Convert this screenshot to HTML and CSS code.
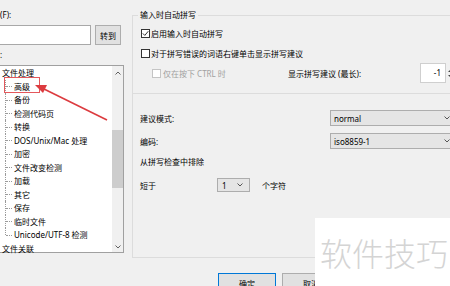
FILE: index.html
```html
<!DOCTYPE html>
<html lang="zh-CN">
<head>
    <meta charset="UTF-8">
    <meta name="viewport" content="width=device-width, initial-scale=1.0">
    <title>选项 - 拼写检查</title>
    <link rel="stylesheet" href="styles.css">
</head>
<body>

<div class="dialog">
    <!-- 左侧：查找 + 分类树 -->
    <div class="left">
        <div class="label">(F):</div>
        <div class="find-row">
            <div class="find-input"></div>
            <button class="btn btn-go">转到</button>
        </div>
        <div class="label">:</div>
        <div class="tree">
            <ul class="tree-list">
                <li>文件处理
                    <ul class="children">
                        <li>高级</li>
                        <li>备份</li>
                        <li>检测代码页</li>
                        <li>转换</li>
                        <li>DOS/Unix/Mac 处理</li>
                        <li>加密</li>
                        <li>文件改变检测</li>
                        <li>加载</li>
                        <li>其它</li>
                        <li>保存</li>
                        <li>临时文件</li>
                        <li>Unicode/UTF-8 检测</li>
                    </ul>
                </li>
                <li>文件关联</li>
            </ul>
            <div class="scrollbar">
                <span class="sb-arrow sb-up">
                    <svg width="6" height="4" viewBox="0 0 6 4"><polyline points="0.5,3.5 3,1 5.5,3.5" fill="none" stroke="#606060" stroke-width="1"/></svg>
                </span>
                <div class="sb-track"><div class="sb-thumb"></div></div>
                <span class="sb-arrow sb-down">
                    <svg width="6" height="4" viewBox="0 0 6 4"><polyline points="0.5,0.5 3,3 5.5,0.5" fill="none" stroke="#606060" stroke-width="1"/></svg>
                </span>
            </div>
        </div>
    </div>

    <!-- 右侧：拼写设置 -->
    <div class="right">
        <fieldset class="group">
            <legend>输入时自动拼写</legend>
            <div class="opt-row">
                <span class="check">
                    <svg width="7" height="7" viewBox="0 0 7 7"><polyline points="0.8,3.4 2.8,5.4 6.3,1.2" fill="none" stroke="#333" stroke-width="1"/></svg>
                </span>
                <span>启用输入时自动拼写</span>
            </div>
            <div class="opt-row">
                <span class="check"></span>
                <span>对于拼写错误的词语右键单击显示拼写建议</span>
            </div>
            <div class="opt-row sub">
                <div class="sub-check">
                    <span class="check disabled"></span>
                    <span class="muted">仅在按下 CTRL 时</span>
                </div>
                <span class="spin-label">显示拼写建议 (最长):</span>
                <div class="spin">
                    <div class="spin-field">-1</div>
                    <div class="spin-btns">
                        <span class="tri-up"></span>
                        <span class="tri-down"></span>
                    </div>
                </div>
            </div>

            <div class="section">
                <div class="form-row">
                    <span class="form-label">建议模式:</span>
                    <div class="select wide"><span>normal</span>
                        <svg width="6" height="4" viewBox="0 0 6 4"><polyline points="0.5,0.5 3,3 5.5,0.5" fill="none" stroke="#555" stroke-width="1"/></svg>
                    </div>
                </div>
                <div class="form-row">
                    <span class="form-label">编码:</span>
                    <div class="select wide"><span>iso8859-1</span>
                        <svg width="6" height="4" viewBox="0 0 6 4"><polyline points="0.5,0.5 3,3 5.5,0.5" fill="none" stroke="#555" stroke-width="1"/></svg>
                    </div>
                </div>
                <div class="exclude">从拼写检查中排除</div>
                <div class="short-row">
                    <span class="short-label">短于</span>
                    <div class="select small"><span>1</span>
                        <svg width="6" height="4" viewBox="0 0 6 4"><polyline points="0.5,0.5 3,3 5.5,0.5" fill="none" stroke="#555" stroke-width="1"/></svg>
                    </div>
                    <span class="unit">个字符</span>
                </div>
            </div>
        </fieldset>

        <div class="buttons">
            <button class="btn btn-default">确定</button>
            <button class="btn">取消</button>
        </div>
    </div>
</div>

<!-- 红色标注 -->
<svg class="annotation" width="450" height="286" viewBox="0 0 450 286">
    <rect x="4.5" y="77.5" width="35" height="15" fill="none" stroke="#e4585c" stroke-width="1"/>
    <line x1="107" y1="120" x2="44" y2="89" stroke="#dc3b3f" stroke-width="1.6"/>
    <polygon points="35,85 47,85 43,93" fill="#dc3b3f"/>
</svg>

<div class="watermark">软件技巧</div>

</body>
</html>
```

FILE: styles.css
```css
* {
    box-sizing: border-box;
}
body {
    margin: 0;
    width: 450px;
    height: 286px;
    overflow: hidden;
    position: relative;
    background-color: #f0f0f0;
    font-family: "Noto Sans", "Noto Sans CJK SC", sans-serif;
    font-size: 8px;
    color: #000;
}
ul {
    list-style: none;
    margin: 0;
    padding: 0;
}
.dialog {
    display: flex;
    height: 286px;
}

/* 左侧 */
.left {
    flex: none;
    width: 126px;
    margin-left: -2px;
    padding-top: 10px;
    display: flex;
    flex-direction: column;
}
.label {
    line-height: 10px;
    padding-left: 2px;
}
.find-row {
    display: flex;
    gap: 4px;
    margin: 5px 0;
}
.find-input {
    width: 93px;
    height: 20px;
    background: #fff;
    border: 1px solid #a8a8a8;
}
.btn {
    font-family: inherit;
    font-size: 8px;
    color: #000;
    padding: 0;
    background: #e1e1e1;
    border: 1px solid #adadad;
}
.btn-go {
    width: 26px;
    height: 20px;
}
.tree {
    margin-top: 5px;
    height: 188px;
    background: #fff;
    border: 1px solid #a0a0a0;
    display: flex;
}
.tree-list {
    flex: 1;
    padding-left: 3px;
    line-height: 13.5px;
    white-space: nowrap;
}
.children {
    margin-left: 3px;
}
.children li {
    position: relative;
    padding-left: 9px;
}
.children li::before {
    content: "";
    position: absolute;
    left: 0;
    top: 0;
    height: 100%;
    border-left: 1px dotted #9a9a9a;
}
.children li:last-child::before {
    height: 50%;
}
.children li::after {
    content: "";
    position: absolute;
    left: 1px;
    top: 50%;
    width: 6px;
    border-top: 1px dotted #9a9a9a;
}
.scrollbar {
    flex: none;
    width: 11px;
    background: #f0f0f0;
    display: flex;
    flex-direction: column;
}
.sb-arrow {
    display: flex;
    justify-content: center;
    align-items: center;
}
.sb-up {
    height: 13px;
}
.sb-down {
    height: 11px;
}
.sb-track {
    flex: 1;
    padding-top: 51px;
}
.sb-thumb {
    height: 58px;
    background: #cdcdcd;
}

/* 右侧 */
.right {
    flex: none;
    width: 340px;
    padding-left: 8px;
    padding-top: 10px;
}
.group {
    margin: 0;
    padding: 0;
    width: 330px;
    height: 248px;
    border: 1px solid #dcdcdc;
}
.group legend {
    margin-left: 5px;
    padding: 0 2px;
    line-height: 10px;
}
.opt-row {
    display: flex;
    align-items: center;
    height: 20px;
    padding-left: 8px;
    gap: 1px;
}
.opt-row:first-of-type {
    margin-top: 3px;
}
.check {
    width: 9px;
    height: 9px;
    background: #fff;
    border: 1px solid #333;
    display: flex;
    justify-content: center;
    align-items: center;
}
.check.disabled {
    border-color: #c4c4c4;
}
.opt-row.sub {
    padding-left: 19px;
    gap: 0;
}
.sub-check {
    width: 136px;
    display: flex;
    align-items: center;
    gap: 2px;
}
.muted {
    color: #a0a0a0;
}
.spin-label {
    width: 132px;
}
.spin {
    display: flex;
    height: 20px;
}
.spin-field {
    width: 26px;
    background: #fff;
    border: 1px solid #cfcfcf;
    text-align: right;
    padding-right: 4px;
    line-height: 18px;
}
.spin-btns {
    width: 10px;
    display: flex;
    flex-direction: column;
    justify-content: space-around;
    align-items: center;
    padding: 4px 0;
}
.tri-up {
    border: 3px solid transparent;
    border-bottom-color: #444;
    border-top-width: 0;
}
.tri-down {
    border: 3px solid transparent;
    border-top-color: #444;
    border-bottom-width: 0;
}

.section {
    margin-top: 10px;
    border-top: 1px solid #dcdcdc;
    padding-left: 7px;
    padding-top: 16px;
}
.form-row {
    display: flex;
    align-items: center;
    height: 16px;
    margin-bottom: 7px;
}
.form-label {
    width: 190px;
}
.select {
    height: 100%;
    background: #e5e5e5;
    border: 1px solid #adadad;
    display: flex;
    justify-content: space-between;
    align-items: center;
    padding: 0 5px 0 3px;
}
.select.wide {
    width: 126px;
}
.exclude {
    line-height: 12px;
    margin-top: 1px;
}
.short-row {
    display: flex;
    align-items: center;
    height: 14px;
    margin-top: 10px;
}
.short-label {
    width: 77px;
}
.select.small {
    width: 33px;
    padding: 0 6px 0 4px;
}
.unit {
    margin-left: 12px;
}

.buttons {
    display: flex;
    gap: 6px;
    margin-top: 15px;
    padding-left: 86px;
}
.buttons .btn {
    width: 58px;
    height: 20px;
}
.btn-default {
    border-color: #0078d7;
}

/* 标注和水印 */
.annotation {
    position: absolute;
    left: 0;
    top: 0;
    pointer-events: none;
}
.watermark {
    position: absolute;
    left: 315px;
    top: 218px;
    width: 140px;
    height: 70px;
    background: #fff;
    padding: 18px 0 0 5px;
    font-family: "Noto Sans CJK SC", sans-serif;
    font-size: 32px;
    font-weight: 300;
    line-height: 32px;
    color: #d4d4d4;
    white-space: nowrap;
}
```
